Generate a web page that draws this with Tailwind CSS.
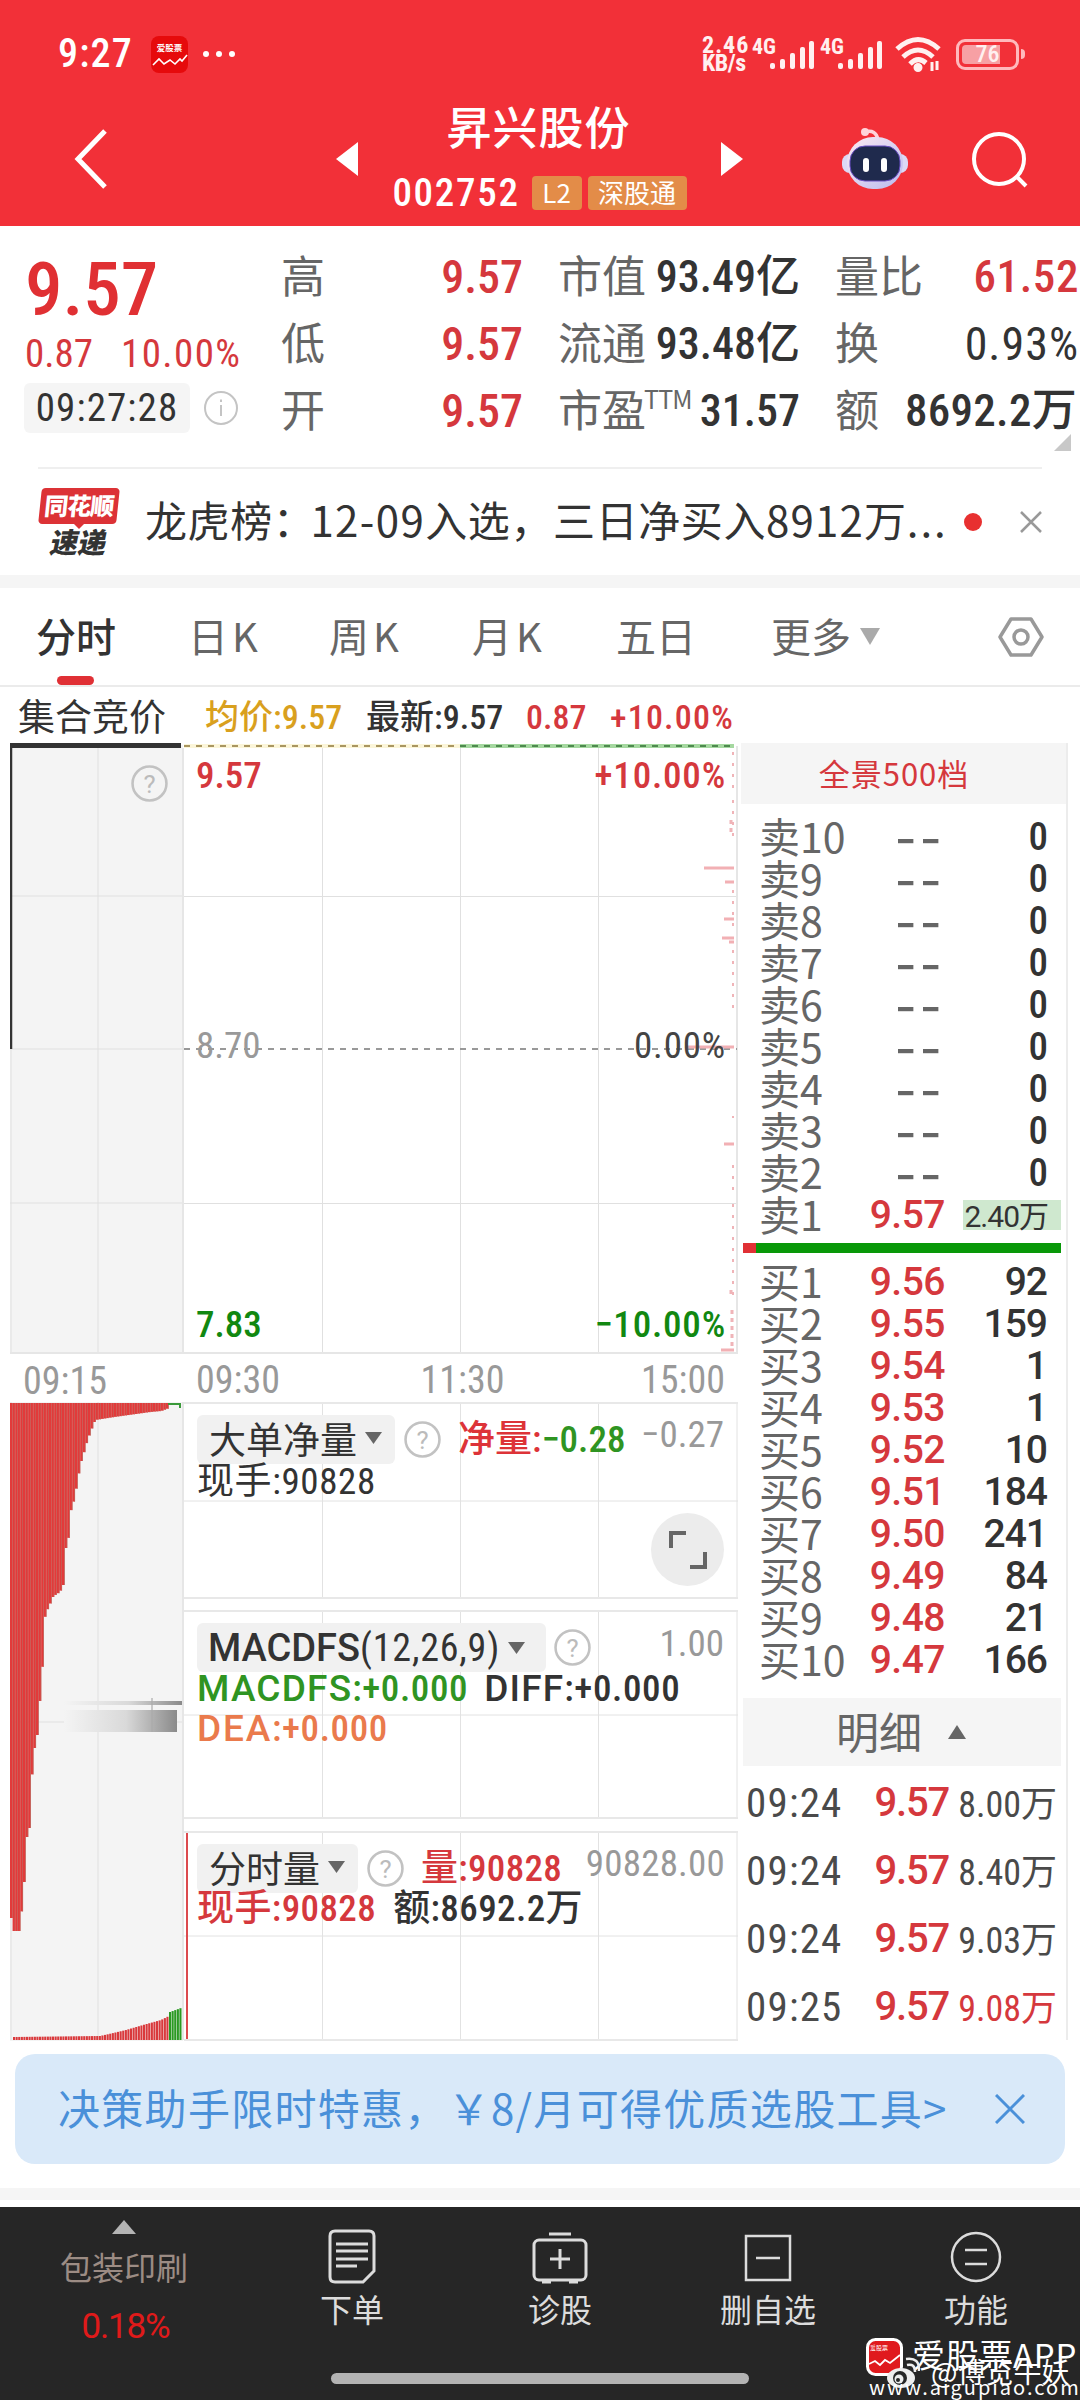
<!DOCTYPE html>
<html lang="zh-CN">
<head>
  <meta charset="UTF-8" />
  <meta name="viewport" content="width=device-width, initial-scale=1.0" />
  <title>昇兴股份 002752</title>
  <script src="https://cdn.jsdelivr.net/npm/@tailwindcss/browser@4"></script>
  <style>
    body { font-family: 'Noto Sans CJK SC', sans-serif; }
    .num { font-family: 'Roboto Condensed', 'Noto Sans CJK SC', sans-serif; }
    .rb { font-family: Roboto, 'Noto Sans CJK SC', sans-serif; }
  </style>
</head>
<body class="bg-white w-[1080px] h-[2400px] overflow-hidden leading-none text-[#333] whitespace-nowrap">

  <!-- ヘッダー -->
  <header class="bg-[#f23038] h-[226px] text-white">
    <div class="h-[108px] flex items-center pl-[58px] pr-[55px]">
      <span class="num text-[40px] font-medium tracking-[1.2px]">9:27</span>
      <svg class="ml-[18px]" width="37" height="37" viewBox="0 0 37 37">
        <rect width="37" height="37" rx="8" fill="#e60a0c" />
        <text x="18.5" y="15" font-size="8.5" font-weight="700" fill="#fff" text-anchor="middle" font-family="Noto Sans CJK SC">爱股票</text>
        <path d="M2 29 L8 23 L13 28 L19 24 L24 28 L29 23 L31 25 L36 19" fill="none" stroke="#fff" stroke-width="1.6" />
      </svg>
      <div class="ml-[15px] flex gap-[7px]">
        <i class="size-[6px] rounded-full bg-white"></i>
        <i class="size-[6px] rounded-full bg-white"></i>
        <i class="size-[6px] rounded-full bg-white"></i>
      </div>
      <div class="ml-auto flex items-center text-[#fff0f0]">
        <div class="w-[50px] num text-[24px] leading-[18px] font-bold"><div class="tracking-[1px]">2.46</div><div class="tracking-[-0.5px]">KB/s</div></div>
        <div class="flex items-end h-[32px]">
          <span class="num w-[27px] h-[32px] text-[22px] leading-[18px] font-bold">4G</span>
          <svg class="-ml-[9px]" width="45" height="32" viewBox="0 0 45 32" fill="#fff0f0">
            <rect x="0" y="25" width="5" height="6" rx="2" /><rect x="10" y="21" width="5" height="10" rx="2" /><rect x="20" y="15" width="5" height="16" rx="2" /><rect x="30" y="9" width="5" height="22" rx="2" /><rect x="39" y="3" width="5" height="28" rx="2" />
          </svg>
        </div>
        <div class="ml-[5px] flex items-end h-[32px]">
          <span class="num w-[27px] h-[32px] text-[22px] leading-[18px] font-bold">4G</span>
          <svg class="-ml-[9px]" width="45" height="32" viewBox="0 0 45 32" fill="#fff0f0">
            <rect x="0" y="25" width="5" height="6" rx="2" /><rect x="10" y="21" width="5" height="10" rx="2" /><rect x="20" y="15" width="5" height="16" rx="2" /><rect x="30" y="9" width="5" height="22" rx="2" /><rect x="39" y="3" width="5" height="28" rx="2" />
          </svg>
        </div>
        <svg class="ml-[12px]" width="47" height="36" viewBox="0 0 47 36" fill="none" stroke="#fff0f0" stroke-width="5">
          <path d="M2 13 Q23 -6 44 13" /><path d="M8 21 Q23 7 38 21" /><path d="M15 28 Q23 20 31 27" /><circle cx="23" cy="31.500" r="2" fill="#fff0f0" />
          <path d="M37 26v9M42 25v9" stroke-width="3" />
        </svg>
        <div class="ml-[14px] w-[63px] h-[31px] rounded-[9px] border-[3px] border-[#ffb9bc] p-[3px]">
          <div class="h-full rounded-[4px] bg-gradient-to-r from-[#f7a0a4] from-75% to-transparent to-75% flex items-center justify-center num font-medium text-[24px]">76</div>
        </div>
        <i class="ml-[2px] w-[4px] h-[10px] rounded-r bg-[#ffb9bc]"></i>
      </div>
    </div>
    <div class="h-[102px] flex items-center pl-[73px]">
      <svg width="37" height="64" viewBox="0 0 37 64"><path d="M32 4 L5 32 L32 60" fill="none" stroke="#fff" stroke-width="5" /></svg>
      <svg class="ml-[226px]" width="22" height="34"><path d="M22 0V34L0 17Z" fill="#fff" /></svg>
      <div class="w-[363px] h-[102px] flex flex-col items-center justify-between">
        <h1 class="text-[45px] leading-[38px] font-medium tracking-[1px] -mt-[1px] pr-[2px]">昇兴股份</h1>
        <div class="flex items-center h-[34px]">
          <span class="num text-[39px] font-medium tracking-[1.7px]">002752</span>
          <span class="ml-[12px] w-[50px] h-[34px] rounded-[4px] bg-[#e38c48] text-[26px] flex items-center justify-center pb-[2px]">L2</span>
          <span class="ml-[6px] w-[99px] h-[34px] rounded-[4px] bg-[#e38c48] text-[26px] flex items-center justify-center pb-[2px]">深股通</span>
        </div>
      </div>
      <svg width="22" height="34"><path d="M0 0V34L22 17Z" fill="#fff" /></svg>
      <svg class="ml-[98px]" width="68" height="64" viewBox="0 0 68 64">
        <defs><linearGradient id="bot" x1="0" y1="0" x2="1" y2="1"><stop offset="0" stop-color="#fdeaf2" /><stop offset="1" stop-color="#b9bbf0" /></linearGradient></defs>
        <path d="M24 5 Q35 2 37 13" fill="none" stroke="#ffd3da" stroke-width="3.500" /><circle cx="24" cy="5" r="4" fill="#ffd3da" />
        <rect x="1" y="27" width="66" height="19" rx="8" fill="#dcd8f5" />
        <rect x="6" y="10" width="56" height="52" rx="26" fill="url(#bot)" />
        <rect x="9" y="19" width="50" height="35" rx="15" fill="#1f2a4d" stroke="#6a4fc4" stroke-width="1" />
        <rect x="22" y="31" width="6" height="14" rx="3" fill="#fff" /><rect x="40" y="31" width="6" height="14" rx="3" fill="#fff" />
      </svg>
      <svg class="ml-[62px]" width="58" height="60" viewBox="0 0 58 60" fill="none" stroke="#fff" stroke-width="4"><circle cx="28" cy="30" r="25" /><path d="M45 47 L55 57" /></svg>
    </div>
  </header>

  <!-- 行情 -->
  <section class="h-[241px] flex pl-[24px] pt-[17px]">
    <div class="w-[257px]">
      <div class="num h-[84px] pt-[13px] pl-[1px] text-[75px] font-medium text-[#e03033] leading-[66px]">9.57</div>
      <div class="num h-[54px] flex items-center text-[39px] text-[#d5383d] pl-[1px] pt-[1px]"><span>0.87</span><span class="ml-[28px] tracking-[1.4px]">10.00%</span></div>
      <div class="flex items-center mt-[2px]">
        <span class="num w-[166px] h-[50px] rounded-[6px] bg-[#f5f5f5] text-[39px] tracking-[1.1px] flex items-center justify-center">09:27:28</span>
        <svg class="ml-[13px]" width="36" height="36" viewBox="0 0 36 36" fill="none" stroke="#c4c4c4" stroke-width="2"><circle cx="18" cy="18" r="16" /><path d="M18 15v11M18 9.500v2.500" /></svg>
      </div>
    </div>
    <div class="w-[242px] grid grid-rows-[67px_67px_67px] text-[44px] text-[#666]">
      <div class="flex items-center justify-between"><span class="pb-[5px]">高</span><span class="num text-[46px] font-medium text-[#d5383d]">9.57</span></div>
      <div class="flex items-center justify-between"><span class="pb-[5px]">低</span><span class="num text-[46px] font-medium text-[#d5383d]">9.57</span></div>
      <div class="flex items-center justify-between"><span class="pb-[5px]">开</span><span class="num text-[46px] font-medium text-[#d5383d]">9.57</span></div>
    </div>
    <div class="ml-[35px] w-[242px] grid grid-rows-[67px_67px_67px] text-[44px] text-[#666]">
      <div class="flex items-center justify-between"><span class="pb-[5px]">市值</span><span class="num text-[44px] font-medium text-[#333]">93.49亿</span></div>
      <div class="flex items-center justify-between"><span class="pb-[5px]">流通</span><span class="num text-[44px] font-medium text-[#333]">93.48亿</span></div>
      <div class="flex items-center justify-between"><span class="flex pb-[5px]">市盈<span class="text-[25px] tracking-[-0.8px] -ml-[2px]">TTM</span></span><span class="num text-[44px] font-medium text-[#333]">31.57</span></div>
    </div>
    <div class="ml-[35px] w-[244px] grid grid-rows-[67px_67px_67px] text-[44px] text-[#666]">
      <div class="flex items-center justify-between"><span class="pb-[5px]">量比</span><span class="num text-[45px] font-medium text-[#d5383d] tracking-[0.6px]">61.52</span></div>
      <div class="flex items-center justify-between"><span class="pb-[5px]">换</span><span class="num text-[46px] text-[#333] tracking-[1px]">0.93%</span></div>
      <div class="flex items-center justify-between relative pr-[2px]"><span class="pb-[5px]">额</span><span class="num text-[45px] font-medium text-[#333] tracking-[0.3px]">8692.2万</span>
        <svg class="absolute right-[8px] -bottom-[7px]" width="17" height="17"><path d="M17 0V17H0Z" fill="#c8c8c8" /></svg>
      </div>
    </div>
  </section>

  <!-- 速递 -->
  <section class="mx-[38px] h-[108px] border-t-[2px] border-[#efefef] flex items-center">
    <div class="w-[82px] flex flex-col items-center">
      <div class="-skew-x-6 w-[78px] h-[36px] rounded-[4px] bg-[#dc3236] text-white text-[24px] font-black flex items-center justify-center tracking-[-1px] pb-[2px]">同花顺</div>
      <i class="border-x-[5px] border-x-transparent border-t-[5px] border-t-[#dc3236]"></i>
      <div class="-skew-x-12 text-[28px] leading-[25px] pb-[2px] font-black">速递</div>
    </div>
    <p class="ml-[25px] w-[808px] text-[42px] tracking-[0.6px] overflow-hidden leading-[60px] pb-[6px]">龙虎榜：<span class="-ml-[5px] tracking-[1.4px]">12-09</span>入选，三日净买入<span class="tracking-[1.2px]">8912</span>万<span class="tracking-[2px]">...</span></p>
    <i class="ml-[11px] size-[18px] rounded-full bg-[#e83030]"></i>
    <svg class="ml-[38px]" width="22" height="22"><path d="M1 1L21 21M21 1L1 21" stroke="#999" stroke-width="2.500" /></svg>
  </section>
  <div class="h-[13px] bg-[#f5f5f5]"></div>

  <!-- 周期 -->
  <nav class="h-[99px] border-b-[2px] border-[#ebebeb] flex items-center text-[40px] text-[#666] pl-[36px]">
    <div class="relative w-[152px] h-full flex items-center font-medium text-[#333] pb-[4px]">分时<i class="absolute left-[21px] bottom-0 w-[37px] h-[9px] rounded-full bg-[#e03035]"></i></div>
    <div class="w-[141px] tracking-[4px] pb-[4px]">日K</div>
    <div class="w-[143px] tracking-[4px] pb-[4px]">周K</div>
    <div class="w-[144px] tracking-[4px] pb-[4px]">月K</div>
    <div class="w-[155px] pb-[4px]">五日</div>
    <div class="pb-[4px]">更多</div>
    <svg class="ml-[9px]" width="20" height="17"><path d="M0 0H20L10 17Z" fill="#aaa" /></svg>
    <svg class="ml-[118px]" width="46" height="42" viewBox="0 0 46 42" fill="none" stroke="#999" stroke-width="3.500" stroke-linejoin="round"><path d="M13 3H33L44 21L33 39H13L2 21Z" /><circle cx="23" cy="21" r="7" /></svg>
  </nav>

  <div class="h-[56px] pt-[3px] flex items-center text-[34px] font-medium">
    <span class="ml-[18px] w-[187px] text-[37px] font-normal pb-[3px]">集合竞价</span>
    <span class="num w-[161px] text-[#d9a01e]">均价:9.57</span>
    <span class="num w-[160px]">最新:9.57</span>
    <span class="num w-[84px] text-[#d5383d]">0.87</span>
    <span class="num text-[#d5383d] tracking-[1.2px]">+10.00%</span>
  </div>

  <div class="flex h-[1311px] pl-[10px]">
    <!-- 集合竞价 -->
    <div class="w-[174px]">
      <div class="relative h-[611px]">
        <svg class="block" width="174" height="611" viewBox="10 743 174 611">
          <rect x="10" y="745" width="173" height="609" fill="#f4f4f4" />
          <path d="M98 748V1354M10 896H183M10 1049H183M10 1203H183M11 1049V1354" stroke="#e0e0e0" />
          <path d="M183 748V1354M10 1353H184" stroke="#e6e6e6" stroke-width="2" />
          <path d="M11 745V1049" stroke="#333" stroke-width="2.500" /><path d="M10 745.500H181" stroke="#333" stroke-width="5" />
        </svg>
        <svg class="absolute left-[121px] top-[22px]" width="37" height="37" viewBox="0 0 36 36"><circle cx="18" cy="18" r="16.500" fill="none" stroke="#c2c2c2" stroke-width="2.500" /><text x="18" y="27" font-size="25" text-anchor="middle" fill="#bbb" font-family="Roboto">?</text></svg>
      </div>
      <div class="num h-[48px] pl-[13px] pt-[10px] text-[38px] text-[#999] leading-[34px]">09:15</div>
      <svg class="block" width="174" height="639" viewBox="10 1402 174 639">
        <defs>
          <linearGradient id="fade"><stop offset="0" stop-color="#f4f4f4" /><stop offset=".55" stop-color="#d9d9d9" /><stop offset="1" stop-color="#8a8a8a" /></linearGradient>
        </defs>
        <rect x="10" y="1402" width="173" height="639" fill="#f4f4f4" />
        <path d="M98 1402V2040M10 1722H183M11 1402V2040" stroke="#e0e0e0" />
        <path d="M183 1402V2040" stroke="#e6e6e6" stroke-width="2" />
        <rect x="64" y="1701" width="118" height="4" fill="url(#fade)" />
        <rect x="64" y="1710" width="113" height="22" fill="url(#fade)" /><rect x="151" y="1698" width="2" height="34" fill="#aaa" opacity=".6" />
        <g id="bars"></g>
      </svg>
    </div>

    <!-- 分时图 -->
    <div class="w-[554px] text-[37px]">
      <div class="relative h-[611px]">
        <svg class="block" width="554" height="611" viewBox="184 743 554 611">
          <path d="M322.500 746V1354M460.500 746V1354M598.500 746V1354M184 896.500H737M184 1203.500H737" stroke="#e0e0e0" />
          <path d="M184 1353H738M737 746V1354" stroke="#e6e6e6" stroke-width="2" />
          <path d="M184 746H460" stroke="#fbf5d8" stroke-width="4" /><path d="M460 746H734" stroke="#a5d8a0" stroke-width="4" />
          <path d="M184 746H735" stroke="#a99660" stroke-width="2" stroke-dasharray="6 6" />
          <path d="M460 746H735" stroke="#4e8a4e" stroke-width="2" stroke-dasharray="6 6" />
          <path d="M184 1049H737" stroke="#999" stroke-width="2" stroke-dasharray="6 6" />
          <path d="M704 868H734M725 882H734M724 919H734M722 938H734M729 942H734M686 1047H734M724 1144H734M721 1350H734" stroke="#f2b0b4" stroke-width="3" />
          <path d="M733 752V790M733 800V838M733 890V930M733 950V1016M733 1116V1118M733 1165V1190M733 1204V1300" stroke="#f0b4b8" stroke-width="2" stroke-dasharray="3 8" />
          <path d="M731 820V832M731 1290V1294M732 1310V1346" stroke="#f0b4b8" stroke-width="3" stroke-dasharray="4 4" />
        </svg>
        <div class="num absolute inset-0 flex flex-col justify-between pl-[12px] pr-[12px] pt-[14px] pb-[11px] font-medium">
          <div class="flex justify-between text-[#d5383d]"><span>9.57</span><span class="tracking-[0.8px]">+10.00%</span></div>
          <div class="flex justify-between text-[#999] font-normal pb-[9px]"><span>8.70</span><span class="text-[#444] tracking-[0.8px]">0.00%</span></div>
          <div class="flex justify-between text-[#118811]"><span>7.83</span><span class="tracking-[0.8px]">−10.00%</span></div>
        </div>
      </div>
      <div class="num h-[48px] flex justify-between pl-[12px] pr-[13px] pt-[9px] text-[38px] text-[#999] leading-[34px]"><span>09:30</span><span class="ml-[4px]">11:30</span><span>15:00</span></div>

      <div class="relative h-[197px] border-y-[2px] border-[#e8e8e8]">
        <svg class="absolute inset-0" width="554" height="193"><path d="M138.500 0V193M276.500 0V193M414.500 0V193M0 97H554M553 0V193" stroke="#e2e2e2" fill="none" /></svg>
        <div class="relative pl-[13px] pt-[11px]">
          <div class="flex items-center h-[49px]">
            <div class="w-[198px] h-[49px] rounded-[6px] bg-[#f1f1f1] flex items-center pl-[12px] pb-[3px]">大单净量<svg class="ml-[8px]" width="17" height="12"><path d="M0 0H17L8.500 12Z" fill="#666" /></svg></div>
            <svg class="ml-[9px]" width="37" height="37" viewBox="0 0 36 36"><circle cx="18" cy="18" r="16.500" fill="none" stroke="#c2c2c2" stroke-width="2.500" /><text x="18" y="27" font-size="25" text-anchor="middle" fill="#bbb" font-family="Roboto">?</text></svg>
            <span class="num ml-[17px] font-medium text-[#dd3338]">净量:<span class="text-[#2f9422]">−0.28</span></span>
            <span class="num ml-auto mr-[14px] text-[#999] pb-[10px]">−0.27</span>
          </div>
          <div class="num text-[37px] -mt-[1px] tracking-[0.6px]">现手:90828</div>
        </div>
        <div class="absolute left-[467px] top-[109px] size-[73px] rounded-full bg-[#ececec] flex items-center justify-center">
          <svg width="38" height="38" fill="none" stroke="#666" stroke-width="4"><path d="M2 17V2H17M36 21V36H21" /></svg>
        </div>
      </div>

      <div class="relative mt-[11px] h-[209px] border-y-[2px] border-[#e8e8e8]">
        <svg class="absolute inset-0" width="554" height="205"><path d="M138.500 0V205M276.500 0V205M414.500 0V205M0 103H554M553 0V205" stroke="#e2e2e2" fill="none" /></svg>
        <div class="relative pl-[13px] pt-[11px]">
          <div class="flex items-center h-[49px]">
            <div class="w-[349px] h-[49px] rounded-[6px] bg-[#f1f1f1] flex items-center pl-[11px]"><span class="rb text-[38px] font-medium">MACDFS</span><span class="num text-[38px] tracking-[0.8px]">(12,26,9)</span><svg class="ml-[8px]" width="17" height="12"><path d="M0 0H17L8.500 12Z" fill="#666" /></svg></div>
            <svg class="ml-[8px]" width="37" height="37" viewBox="0 0 36 36"><circle cx="18" cy="18" r="16.500" fill="none" stroke="#c2c2c2" stroke-width="2.500" /><text x="18" y="27" font-size="25" text-anchor="middle" fill="#bbb" font-family="Roboto">?</text></svg>
            <span class="num ml-auto mr-[14px] text-[#999] pb-[9px]">1.00</span>
          </div>
          <div class="num leading-[40px] -mt-[3px] font-medium flex"><span class="text-[#2f9422]"><span class="rb tracking-[1.2px]">MACDFS</span><span class="tracking-[0.6px]">:+0.000</span></span><span class="ml-[16px]"><span class="rb tracking-[1.2px]">DIFF</span><span class="tracking-[0.6px]">:+0.000</span></span></div>
          <div class="num leading-[40px] font-medium text-[#ea7a4c] tracking-[0.6px]"><span class="rb tracking-[1.8px]">DEA</span>:+0.000</div>
        </div>
      </div>

      <div class="relative mt-[12px] h-[210px] border-y-[2px] border-[#e8e8e8]">
        <svg class="absolute inset-0" width="554" height="206"><path d="M138.500 0V206M276.500 0V206M414.500 0V206M0 103H554M553 0V206" stroke="#e2e2e2" fill="none" /><path d="M3 0V206" stroke="#dc4a4e" stroke-width="2" /></svg>
        <div class="relative pl-[13px] pt-[11px]">
          <div class="flex items-center h-[49px]">
            <div class="w-[161px] h-[49px] rounded-[6px] bg-[#f1f1f1] flex items-center pl-[12px] pb-[3px]">分时量<svg class="ml-[8px]" width="17" height="12"><path d="M0 0H17L8.500 12Z" fill="#666" /></svg></div>
            <svg class="ml-[9px]" width="37" height="37" viewBox="0 0 36 36"><circle cx="18" cy="18" r="16.500" fill="none" stroke="#c2c2c2" stroke-width="2.500" /><text x="18" y="27" font-size="25" text-anchor="middle" fill="#bbb" font-family="Roboto">?</text></svg>
            <span class="num ml-[17px] font-medium text-[#d5383d] tracking-[0.3px]">量:90828</span>
            <span class="num ml-auto mr-[13px] text-[#999] pb-[10px] tracking-[0.2px]">90828.00</span>
          </div>
          <div class="num text-[37px] font-medium leading-[32px] tracking-[0.4px]"><span class="text-[#d5383d]">现手:90828</span><span class="ml-[17px]">额:8692.2万</span></div>
        </div>
      </div>
    </div>

    <!-- 盘口 -->
    <div class="w-[330px] h-[1297px] border-r-[2px] border-[#ececec] pl-[5px] pr-[5px]">
      <div class="-ml-[2px] -mr-[5px] h-[61px] bg-[#f5f5f5] flex items-center justify-center text-[31px] text-[#d5383d] tracking-[1px] pr-[19px] pb-[3px]">全景500档</div>
      <div id="sell" class="pt-[12px]"></div>
      <div class="mt-[7px] h-[10px] flex"><i class="w-[13px] bg-[#e03035]"></i><i class="flex-1 bg-[#089808]"></i></div>
      <div id="buy" class="pt-[8px]"></div>
      <div class="mt-[17px] h-[68px] bg-[#f5f5f5] flex items-center pl-[93px] text-[43px] text-[#666]"><span class="pb-[4px]">明细</span><svg class="ml-[26px]" width="18" height="14"><path d="M0 14H18L9 0Z" fill="#666" /></svg></div>
      <div id="trades" class="pt-[3px]"></div>
    </div>
  </div>

  <!-- 广告条 -->
  <div class="mx-[15px] h-[110px] rounded-[20px] bg-[#d9e9f9] text-[#4a90d9] flex items-center pl-[43px] pr-[40px] justify-between">
    <span class="text-[42px] tracking-[1.3px] pb-[4px]">决策助手限时特惠，￥8/月可得优质选股工具&gt;</span>
    <svg width="30" height="30"><path d="M1 1L29 29M29 1L1 29" stroke="#4a90d9" stroke-width="3" /></svg>
  </div>
  <div class="mt-[24px] h-[12px] bg-[#f5f5f5]"></div>

  <!-- 下部ナビ -->
  <footer class="relative mt-[7px] h-[193px] bg-[#262626] text-[32px] text-[#dcdcdc]">
    <div class="flex">
      <div class="w-[248px] flex flex-col items-center pt-[13px] text-[#9c8c84]">
        <svg width="24" height="14"><path d="M0 14H24L12 0Z" fill="#b4b4b4" /></svg>
        <span class="mt-[16px]">包装印刷</span>
        <span class="rb mt-[27px] ml-[3px] text-[35px] text-[#e01a1a] tracking-[-1.2px]">0.18%</span>
      </div>
      <div class="w-[208px] flex flex-col items-center pt-[22px]">
        <svg width="50" height="56" viewBox="0 0 50 56" fill="none" stroke="#dcdcdc" stroke-width="3"><path d="M8 2H42Q47 2 47 7V42L36 53H8Q3 53 3 48V7Q3 2 8 2Z" /><path d="M9 15H41M9 22H41M9 30H41M9 37H30" /></svg>
        <span class="mt-[7px]">下单</span>
      </div>
      <div class="w-[208px] flex flex-col items-center pt-[22px]">
        <svg width="58" height="56" viewBox="0 0 58 56" fill="none" stroke="#dcdcdc" stroke-width="3"><rect x="3" y="11" width="52" height="40" rx="5" /><path d="M18 5H40M29 20V40M19 30H39M11 53H20M38 53H47" /></svg>
        <span class="mt-[7px]">诊股</span>
      </div>
      <div class="w-[208px] flex flex-col items-center pt-[22px]">
        <svg width="50" height="56" viewBox="0 0 50 56" fill="none" stroke="#dcdcdc" stroke-width="2.500"><rect x="3" y="7" width="44" height="44" /><path d="M13 29H37" /></svg>
        <span class="mt-[7px]">删自选</span>
      </div>
      <div class="w-[208px] flex flex-col items-center pt-[22px]">
        <svg width="54" height="56" viewBox="0 0 54 56" fill="none" stroke="#dcdcdc" stroke-width="2.500"><circle cx="27" cy="28" r="24" /><path d="M16 21H38M16 35H38" /></svg>
        <span class="mt-[7px]">功能</span>
      </div>
    </div>
    <i class="absolute left-[331px] top-[166px] w-[418px] h-[11px] rounded-full bg-[#b3b3b3]"></i>

    <!-- 透かし -->
    <div class="absolute right-[0px] bottom-0 w-[214px] h-[66px] text-white">
      <svg class="absolute left-0 top-[4px]" width="37" height="38" viewBox="0 0 37 38">
        <rect x="1.500" y="1.500" width="34" height="35" rx="8" fill="#e01a1e" stroke="#fff" stroke-width="3" />
        <text x="13" y="12" font-size="6" fill="#fff" text-anchor="middle" font-family="Noto Sans CJK SC">爱股票</text>
        <path d="M3 26L9 23L14 27L19 22L24 25L29 21L34 17" fill="none" stroke="#fff" stroke-width="1.800" />
      </svg>
      <span class="absolute left-[46px] top-[4px] text-[33px] tracking-[0.7px]">爱股票APP</span>
      <svg class="absolute left-[20px] top-[22px]" width="34" height="34" viewBox="0 0 34 34">
        <ellipse cx="15" cy="22" rx="14" ry="10" fill="#eee" /><circle cx="14" cy="22" r="7" fill="#262626" /><circle cx="13" cy="23" r="4.500" fill="#eee" /><circle cx="12" cy="24" r="2" fill="#262626" />
        <path d="M21 9Q29 7 29 16M20 3Q34 1 33 15" fill="none" stroke="#eee" stroke-width="2.500" />
      </svg>
      <span class="absolute left-[65px] top-[23px] text-[28px]">@博览牛妖</span>
      <span class="absolute left-[3px] top-[43px] text-[20px] tracking-[2px]">www.aigupiao.com</span>
    </div>
  </footer>

  <script>
    const buys = [['9.56', 92], ['9.55', 159], ['9.54', 1], ['9.53', 1], ['9.52', 10], ['9.51', 184], ['9.50', 241], ['9.49', 84], ['9.48', 21], ['9.47', 166]];
    const trades = [['09:24', '8.00万'], ['09:24', '8.40万'], ['09:24', '9.03万'], ['09:25', '9.08万']];

    function row(label, price, vol) {
      return `
        <div class="h-[42px] flex items-center pl-[16px] pr-[14px]">
          <span class="w-[90px] text-[41px] pb-[4px] text-[#666]">${label}</span>
          <span class="w-[96px] text-right rb text-[39px] font-medium tracking-[-0.5px] text-[#d5383d]">${price}</span>
          <span class="ml-auto rb text-[39px] font-medium tracking-[-1px]">${vol}</span>
        </div>`;
    }

    let sell = '';
    for (let i = 10; i > 1; i--) {
      sell += `
        <div class="h-[42px] flex items-center pl-[16px] pr-[13px]">
          <span class="w-[90px] text-[41px] pb-[4px] text-[#666]">卖${i}</span>
          <span class="w-[96px] text-right text-[60px] leading-[20px] pb-[10px] tracking-[4px] text-[#666]">--</span>
          <span class="ml-auto num text-[39px] font-medium">0</span>
        </div>`;
    }
    sell += `
      <div class="h-[42px] flex items-center pl-[16px]">
        <span class="w-[90px] text-[41px] pb-[4px] text-[#666]">卖1</span>
        <span class="w-[96px] text-right rb text-[39px] font-medium tracking-[-0.5px] text-[#d5383d]">9.57</span>
        <span class="ml-auto w-[98px] h-[30px] bg-[#cfe8cf] rb text-[30px] tracking-[-1px] flex items-center justify-end pr-[13px] pt-[3px]">2.40万</span>
      </div>`;
    document.getElementById('sell').innerHTML = sell;
    document.getElementById('buy').innerHTML = buys.map((b, i) => row('买' + (i + 1), b[0], b[1])).join('');

    document.getElementById('trades').innerHTML = trades.map((t, i) => `
      <div class="h-[68px] flex items-center pl-[3px] pr-[4px]">
        <span class="num w-[128px] text-[41px] tracking-[1.2px] text-[#4a4a4a]">${t[0]}</span>
        <span class="rb w-[75px] text-right text-[40px] font-medium tracking-[-1.2px] text-[#d5383d]">9.57</span>
        <span class="num ml-auto text-[36px] pt-[3px] ${i === 3 ? 'text-[#d5383d]' : 'text-[#4a4a4a]'}">${t[1]}</span>
      </div>`).join('');

    // 竞价柱: [x, y] の折れ点
    const netPts = [[10, 1918], [12, 1931], [20, 1931], [21, 1882], [23.6, 1882], [25, 1837], [27, 1837], [28, 1828], [30, 1828], [31, 1761], [33, 1750], [36, 1735], [38, 1706], [40.5, 1685], [43, 1620], [45, 1612], [48, 1606], [52, 1596], [56, 1594], [60, 1590], [62, 1585], [64, 1550], [67, 1540], [70, 1508], [73, 1500], [76, 1483], [79, 1465], [82, 1455], [86, 1441], [90, 1430], [94, 1420], [113, 1417], [149, 1412], [160, 1411], [168, 1408]];
    const volPts = [[13, 2037], [99, 2036], [108, 2034], [125, 2030], [142, 2025], [160, 2020], [168, 2016], [169, 2012], [180, 2008]];

    function at(pts, x) {
      for (let i = 1; i < pts.length; i++) {
        if (x <= pts[i][0]) {
          const [x0, y0] = pts[i - 1], [x1, y1] = pts[i];
          return y0 + (y1 - y0) * (x - x0) / (x1 - x0);
        }
      }
      return pts[pts.length - 1][1];
    }

    let svg = '';
    for (let x = 10; x < 168; x += 2.6) {
      const y = at(netPts, x);
      svg += `<rect x="${x}" y="1403" width="2.6" height="${y - 1403}" fill="#e23a3a"/><rect x="${x + 2}" y="1403" width="0.7" height="${y - 1403}" fill="#b96a60"/>`;
    }
    svg += '<path d="M168 1404H180V1408" fill="none" stroke="#3a9a3a" stroke-width="2"/>';
    for (let x = 13; x < 180; x += 2.6) {
      const y = at(volPts, x), c = x < 168 ? '#d9393c' : '#2a9a22';
      svg += `<rect x="${x}" y="${y}" width="2.1" height="${2040 - y}" fill="${c}"/>`;
    }
    document.getElementById('bars').innerHTML = svg;
  </script>
</body>
</html>
